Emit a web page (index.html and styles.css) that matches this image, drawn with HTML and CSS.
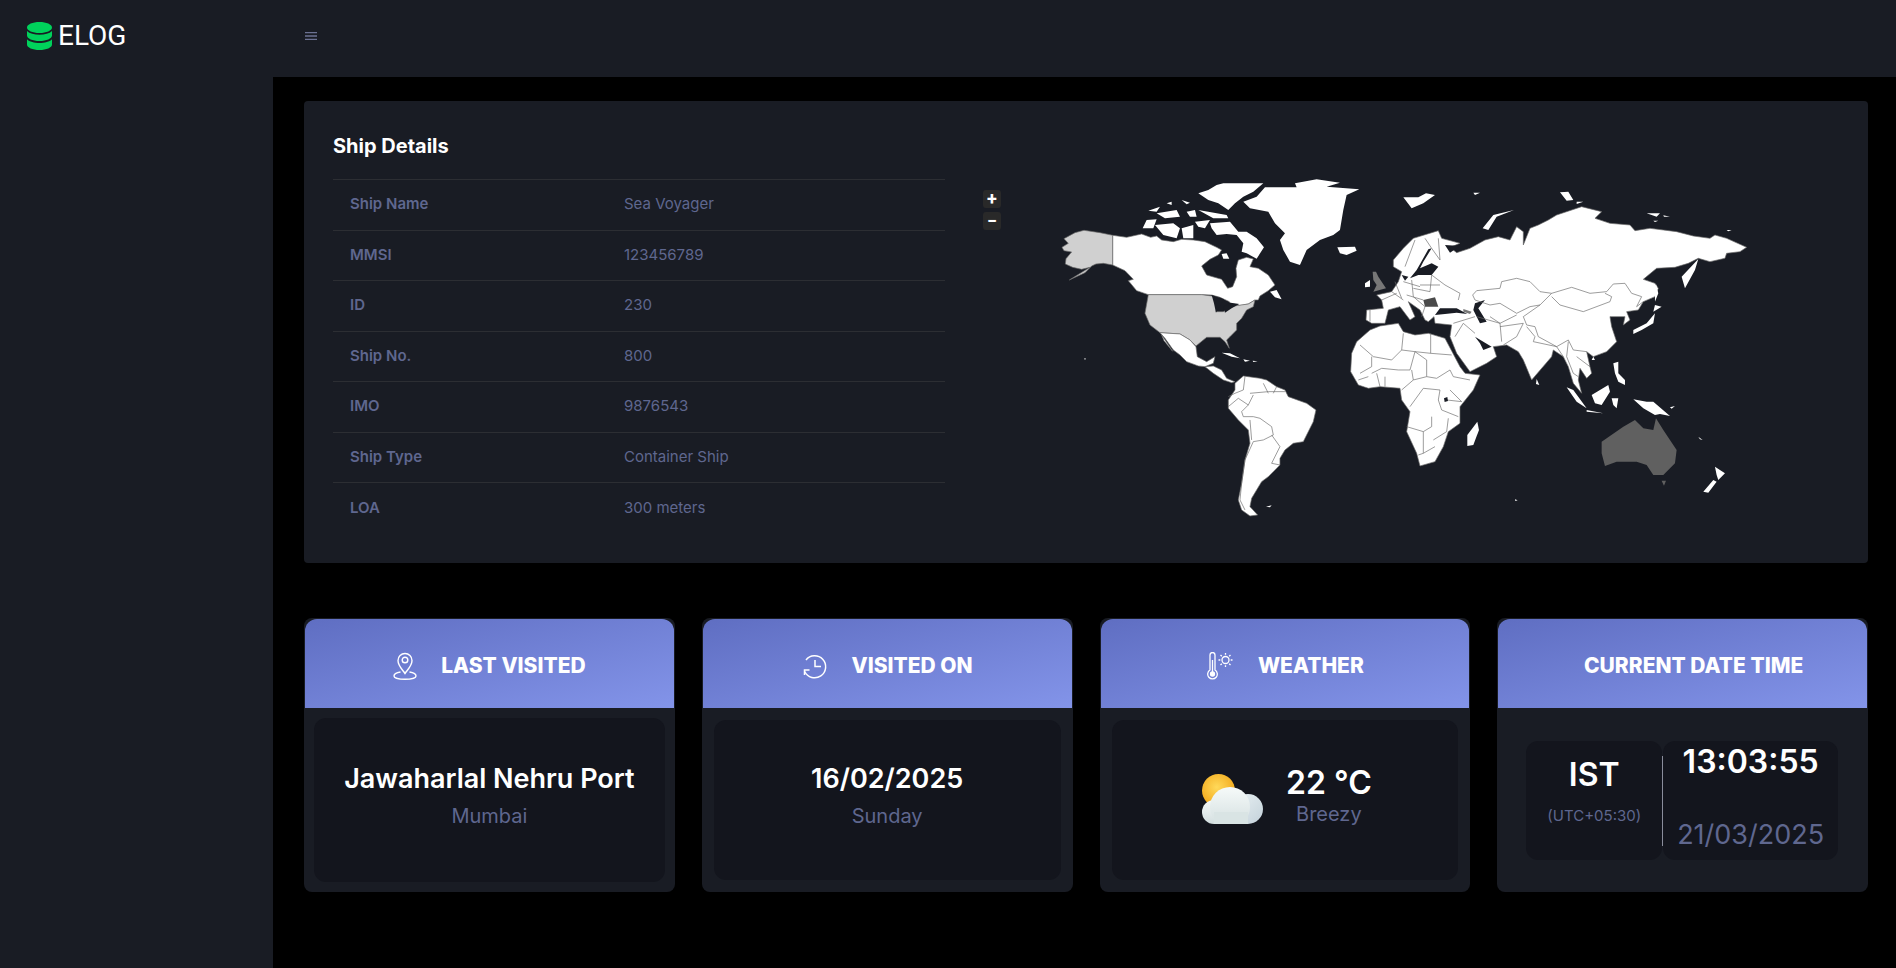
FILE: index.html
```html
<!DOCTYPE html>
<html lang="en">
<head>
<meta charset="utf-8">
<title>ELOG</title>
<link rel="stylesheet" href="styles.css">
</head>
<body>
<div class="app">
  <aside class="sidebar">
    <div class="brand">
      <svg class="brand-icon" viewBox="0 0 25 28"><path fill="#00d25b" d="M12.5 0C19.4 0 25 2.400 25 5.500S19.400 11 12.500 11 0 8.600 0 5.500 5.600 0 12.500 0zM0 9c2.500 2.600 7.300 3.800 12.500 3.800S22.500 11.600 25 9v4.500c0 3-5.600 5.500-12.500 5.500S0 16.500 0 13.500zM0 17.300c2.500 2.600 7.300 3.700 12.500 3.700S22.500 19.900 25 17.300v5.200C25 25.600 19.400 28 12.500 28S0 25.600 0 22.500z"/></svg>
      <span class="brand-name">ELOG</span>
    </div>
  </aside>
  <div class="content">
    <header class="topbar">
      <svg class="menu-icon" viewBox="0 0 12 8"><path d="M0 .5h12M0 4h12M0 7.500h12" stroke="#6c7293" stroke-width="1.300" fill="none"/></svg>
    </header>
    <main class="main">
      <section class="ship-card">
        <h2 class="ship-title">Ship Details</h2>
        <div class="ship-body">
          <table class="ship-table">
            <tr><th>Ship Name</th><td>Sea Voyager</td></tr>
            <tr><th>MMSI</th><td>123456789</td></tr>
            <tr><th>ID</th><td>230</td></tr>
            <tr><th>Ship No.</th><td>800</td></tr>
            <tr><th>IMO</th><td>9876543</td></tr>
            <tr><th>Ship Type</th><td>Container Ship</td></tr>
            <tr><th>LOA</th><td>300 meters</td></tr>
          </table>
          <div class="map">
            <div class="zoom-btns"><span class="zoom-btn">+</span><span class="zoom-btn">−</span></div>
            <svg class="map-svg" viewBox="960 179 820 354">
              <g transform="translate(960 160) scale(.3333)" fill="#fff" stroke="#6b6b6b" stroke-width="2" stroke-linejoin="round">
                <path d="M458 226L500 232L545 222L572 232L590 228L605 240L640 245L665 238L700 240L735 245L770 262L785 270L775 285L750 298L725 318L740 345L785 358L803 385L818 380L830 350L828 325L835 300L860 292L880 297L870 320L895 325L925 345L945 375L925 392L900 408L895 420L885 420L865 432L820 440L808 425L780 412L755 405L725 404L565 404L530 392L505 362L520 358L495 332L458 315Z"/>
                <path fill="#d0d0d0" d="M458 226L420 218L372 211L345 218L312 236L325 250L306 262L312 272L335 276L318 296L316 312L338 322L365 328L390 322L328 360L375 338L395 318L408 312L430 310L458 315Z"/>
                <path fill="#d0d0d0" d="M565 404L725 404L755 408L775 412L768 455L790 455L808 440L865 432L885 420L880 440L860 450L845 475L830 490L830 510L810 530L800 540L808 565L795 545L780 532L740 532L708 558L690 540L660 522L600 518L570 495L555 460Z"/>
                <path d="M600 518L660 522L690 540L708 560L712 590L740 605L765 590L760 610L735 620L715 618L680 605L660 585L640 570L615 535ZM605 525L638 574L612 542Z"/>
                <path d="M735 620L760 618L785 630L800 655L825 665L815 668L790 660L760 640Z"/>
                <g stroke="none">
                  <path d="M785 578L810 580L840 595L815 590ZM850 598L870 602L855 605ZM878 602L893 604L880 606ZM375 595a2 2 0 1 0 .1 0Z"/>
                  <path d="M1005 70L1070 58L1140 68L1100 80L1198 88L1160 105L1150 150L1140 210L1120 225L1080 240L1040 270L1020 315L990 305L970 270L960 240L975 220L945 190L925 155L870 145L850 125L890 110L915 82L1010 82Z"/>
                  <path d="M790 70L910 70L880 95L850 110L825 130L805 150L775 130L745 120L715 100L745 90L770 75Z"/>
                  <path d="M750 190L810 185L835 215L860 215L890 235L912 262L890 296L860 280L845 275L850 250L830 225L800 222L770 225L755 205Z"/>
                  <path d="M585 195L640 190L660 205L650 235L610 225ZM548 205L560 180L590 178L580 205ZM565 152L600 140L590 155ZM590 160L650 150L660 170L615 175ZM665 120L690 128L680 133ZM680 155L705 150L710 170L690 170ZM715 150L800 165L805 175L760 175ZM705 185L750 180L735 205L715 200ZM620 130L635 125L635 135ZM665 205L700 195L700 235L670 235ZM930 395L950 390L965 418L945 412ZM785 282L800 280L808 296L790 296Z"/>
                  <path d="M1132 262L1185 260L1190 272L1160 285L1140 280Z"/>
                </g>
                <path d="M850 648L900 655L920 660L950 680L975 690L985 710L1040 730L1068 750L1060 785L1040 825L1030 845L1000 850L975 870L960 895L960 915L940 935L925 950L905 965L890 990L875 1015L870 1040L893 1065L870 1068L845 1050L835 1020L845 970L855 900L870 850L865 810L835 780L805 745L805 720L825 690L825 670Z"/>
                <path stroke="none" d="M918 1040L935 1036L930 1042Z"/>
                <g fill="none">
                  <path d="M855 650L850 690L825 700L805 710M805 740L835 715L865 735L845 755L850 770L880 770L900 775L935 800L940 825L910 840L880 845L855 900L845 970L840 1020L855 1050M870 780L875 840M935 825L960 860L935 910L960 915M870 700L925 695L975 695M910 670L925 700M950 680L940 700M880 705L865 735"/>
                </g>
                <path fill="#191c24" stroke="none" d="M755 405L792 418L778 440L768 458L762 430ZM790 440L812 428L838 432L815 445L795 458Z"/>
              </g>
              <g transform="translate(1360 160) scale(.3333)" fill="#fff" stroke="#6b6b6b" stroke-width="2" stroke-linejoin="round">
                <path d="M-25 580L-10 545L30 510L60 498L115 490L130 515L165 525L205 520L255 535L300 620L315 640L360 645L340 690L300 740L300 790L265 815L250 860L225 905L180 918L170 880L140 815L150 755L125 720L120 685L60 680L25 685L-5 675L-28 635Z"/>
                <path fill="none" d="M0 555L40 590L95 600L125 570L130 520M125 570L165 575L212 580L212 520M212 580L275 585M200 600L165 575L150 630L115 630L65 625L35 640M35 590L35 620L0 640M155 630L160 660L125 690M200 600L200 650L230 655L270 630L280 650L330 660M160 660L200 650M150 740L190 685L240 690L235 720L245 750L295 770M270 690L305 725L260 720M140 800L190 815L190 880L175 885M215 770L215 800L190 815M220 840L260 815L265 775M225 860L190 880M50 640L60 680M75 650L75 680M-5 660L25 650"/>
                <path fill="#191c24" stroke="none" d="M252 715l10-4 2 12-10 3Z"/>
                <path stroke="none" d="M352 785L357 810L340 855L322 858L322 825Z"/>
                <path d="M100 300L130 265L160 235L235 212L245 235L300 250L270 262L290 278L330 265L375 240L415 230L450 240L470 200L490 215L490 255L510 205L535 195L565 180L590 165L665 140L725 155L705 175L750 190L810 195L825 212L870 205L950 215L1000 228L1050 235L1065 225L1100 235L1160 262L1140 275L1100 280L1095 295L1050 305L1015 295L985 310L945 322L890 325L850 358L885 370L895 385L885 410L850 425L835 450L800 455L810 480L790 495L795 470L750 470L755 500L770 545L740 575L700 590L680 575L690 620L695 640L680 655L660 625L655 660L665 700L640 670L625 620L610 590L580 570L575 590L515 660L490 600L475 575L440 555L400 560L410 590L380 610L330 635L290 580L270 530L275 495L225 490L222 470L205 485L195 480L180 450L145 425L165 470L150 480L120 440L85 450L75 490L35 490L18 480L20 450L70 445L65 420L50 405L95 395L115 365L125 335L100 320Z"/>
                <g fill="#191c24" stroke="none">
                  <path d="M225 465L240 445L290 445L322 462L290 458L255 462Z"/>
                  <path d="M345 430L375 420L355 445L380 485L360 490L340 450Z"/>
                  <path d="M345 530L395 560L370 570L360 550Z"/>
                  <path d="M150 355L170 330L205 268L215 265L190 305L180 325L215 310L235 320L215 345L175 345Z"/>
                  <path d="M255 255L300 258L270 278Z"/>
                  <path d="M125 345L145 350L135 362Z"/>
                </g>
                <path fill="none" d="M215 345L255 375L300 400L295 420M338 405L350 392L420 385L425 365L470 355L510 365L540 395L575 400M575 400L635 382L690 400L740 395L760 372L795 370L815 400L845 410L830 440L850 425M575 410L600 435L670 455L750 425L755 410L735 400M338 405L345 420L390 435L420 430L470 460L510 440L540 435L575 400M540 435L490 470L500 495L525 500L535 530L590 560L625 540L640 570L680 575M390 470L420 490L470 465M350 470L385 480L420 490L425 545M420 500L490 490L470 530L430 555M500 500L525 530L520 545L590 560L610 590M625 545L620 590L640 640L655 650M650 590L690 620M285 530L310 490L345 520M280 490L345 470M95 395L130 420M105 365L125 415M155 360L160 410M215 345L210 395L160 385M190 420L140 405M240 375L180 375M135 320L165 240M195 235L215 265L240 300L235 235M65 420L110 400M30 450L30 485M130 365L180 380M160 410L195 440M195 440L185 470"/>
                <path fill="#777" stroke="none" d="M38 335L48 335L55 350L78 385L40 395L50 375L40 360Z"/>
                <path stroke="none" d="M15 370L30 360L30 380L15 382Z"/>
                <path fill="#4a4a4a" stroke="none" d="M190 420L225 412L235 440L195 440Z"/>
                <path fill="#777" stroke="none" d="M310 447L335 455L330 462L310 455Z"/>
                <path fill="#606060" stroke="none" d="M725 845L790 800L825 780L850 805L880 810L888 775L910 810L950 870L945 910L910 945L880 945L860 915L830 905L770 905L735 918L725 880ZM905 962L918 962L912 977Z"/>
                <g stroke="none">
                  <path d="M130 112L175 112L198 100L225 105L190 130L155 145ZM368 205L400 165L462 150L410 170L385 210ZM965 350L1015 297L1005 330L975 385Z"/>
                  <path d="M885 435L905 440L880 455ZM885 460L880 490L845 510L820 522L820 510L860 490ZM888 372L895 400L885 425L885 400Z"/>
                  <path d="M600 97L625 95L640 120L620 122ZM650 125L670 125L650 132ZM860 160L900 160L890 170ZM880 182L895 182L885 186ZM1100 210L1115 210L1105 214ZM340 98L360 98L345 105ZM910 166L930 170L912 170Z"/>
                  <path d="M760 610L775 605L775 640L795 660L795 675L775 665L765 640ZM695 705L745 675L750 695L725 735L705 730ZM620 682L640 690L680 745L650 725ZM680 750L730 760L680 755ZM755 715L775 715L770 745L760 735ZM820 718L860 725L880 725L930 768L900 762L885 765L850 745Z"/>
                  <path d="M1065 920L1095 940L1075 960L1070 945ZM1060 960L1030 995L1045 998L1070 965ZM530 657L538 675L528 672ZM700 590L705 600L695 600ZM465 1018L473 1021L466 1023ZM930 742L945 738L935 746ZM1015 830L1028 840L1020 838Z"/>
                </g>
              </g>
            </svg>
          </div>
        </div>
      </section>

      <section class="stats">
        <article class="stat-card">
          <header class="stat-head">
            <svg class="stat-icon" viewBox="0 0 24 28" fill="none" stroke="#fff" stroke-width="1.400"><path d="M12 21.500C8.500 16.500 5 13.500 5 8.500a7 7 0 0 1 14 0c0 5-3.500 8-7 13z"/><circle cx="12" cy="8" r="2.800"/><path d="M7.500 20C3.500 20.700 1 22.200 1 24c0 2 5 3.300 11 3.300S23 26 23 24c0-1.800-2.500-3.300-6.500-4"/></svg>
            <span>LAST VISITED</span>
          </header>
          <div class="stat-body pad-tight">
            <div class="panel">
              <div class="big">Jawaharlal Nehru Port</div>
              <div class="sub">Mumbai</div>
            </div>
          </div>
        </article>
        <article class="stat-card">
          <header class="stat-head">
            <svg class="stat-icon clock" viewBox="0 0 26 26" fill="none" stroke="#fff" stroke-width="1.500"><path d="M4 7A11 11 0 1 1 2.700 18.500"/><path d="M13 7v6.500h6"/><path d="M2.500 22v-5h5"/></svg>
            <span>VISITED ON</span>
          </header>
          <div class="stat-body">
            <div class="panel">
              <div class="big">16/02/2025</div>
              <div class="sub">Sunday</div>
            </div>
          </div>
        </article>
        <article class="stat-card">
          <header class="stat-head">
            <svg class="stat-icon thermo" viewBox="0 0 28 28" fill="none" stroke="#fff" stroke-width="1.300"><path d="M4 18V3a2.500 2.500 0 0 1 5 0v15a4.800 4.800 0 1 1-5 0z"/><circle cx="6.500" cy="22" r="2" fill="#fff"/><path d="M6.500 8v12"/><circle cx="19.500" cy="8" r="3.500"/><path d="M19.500 1v1.800M19.500 13.200V15M12.500 8h1.800M24.700 8h1.800M14.500 3l1.300 1.300M23.200 11.700l1.300 1.300M24.500 3l-1.300 1.300M15.800 11.700L14.500 13"/></svg>
            <span>WEATHER</span>
          </header>
          <div class="stat-body">
            <div class="panel panel-row">
              <svg class="weather-icon" viewBox="0 0 62 50">
                <defs>
                  <radialGradient id="sun" cx=".45" cy=".4" r=".7"><stop offset="0" stop-color="#ffd95a"/><stop offset="1" stop-color="#f0a010"/></radialGradient>
                  <linearGradient id="cloud" x1="0" y1="0" x2="0" y2="1"><stop offset="0" stop-color="#f6faf9"/><stop offset="1" stop-color="#d2dedf"/></linearGradient>
                  <linearGradient id="cloud2" x1="0" y1="0" x2="1" y2="1"><stop offset="0" stop-color="#eaf2f4"/><stop offset="1" stop-color="#c3d1da"/></linearGradient>
                </defs>
                <circle cx="16.500" cy="16.500" r="16.500" fill="url(#sun)"/>
                <circle cx="46" cy="35" r="15" fill="url(#cloud2)"/>
                <circle cx="12" cy="38" r="12" fill="url(#cloud)"/>
                <circle cx="28" cy="33" r="20" fill="url(#cloud)"/>
                <rect x="12" y="38" width="34" height="12" fill="#d9e4e4"/>
              </svg>
              <div class="weather-text">
                <div class="temp">22 °C</div>
                <div class="sub sub-tight">Breezy</div>
              </div>
            </div>
          </div>
        </article>
        <article class="stat-card">
          <header class="stat-head stat-head-noicon">
            <span>CURRENT DATE TIME</span>
          </header>
          <div class="stat-body clock-body">
            <div class="zone-box">
              <div class="zone">IST</div>
              <div class="offset">(UTC+05:30)</div>
            </div>
            <div class="clock-rule"></div>
            <div class="time-box">
              <div class="time">13:03:55</div>
              <div class="date">21/03/2025</div>
            </div>
          </div>
        </article>
      </section>
    </main>
  </div>
</div>
</body>
</html>
```
FILE: styles.css
```css
* { box-sizing: border-box; }
html, body { margin: 0; height: 100%; }
body { background: #000; font-family: Inter, Roboto, "Liberation Sans", sans-serif; color: #fff; overflow: hidden; }
.app { display: flex; height: 968px; }
.sidebar { width: 273px; flex: none; background: #191c24; }
.brand { display: flex; align-items: center; gap: 6px; padding: 20px 0 0 27px; }
.brand-icon { width: 25px; height: 28px; flex: none; }
.brand-name { font: 400 28px/32px Roboto, sans-serif; color: #fff; }
.content { flex: 1; min-width: 0; display: flex; flex-direction: column; }
.topbar { height: 77px; flex: none; background: #191c24; display: flex; align-items: center; padding-left: 32px; }
.menu-icon { width: 12px; height: 8px; margin-top: -5px; }
.main { flex: 1; padding: 24px 28px 0 31px; }

.ship-card { height: 462px; background: #191c24; border-radius: 4px; padding: 33px 0 0 29px; }
.ship-title { margin: 0 0 21px; font-size: 20px; line-height: 24px; font-weight: 700; color: #fff; }
.ship-body { display: flex; gap: 15px; }
.ship-table { width: 612px; flex: none; border-collapse: collapse; table-layout: fixed; font-size: 15px; color: #5f678f; }
.ship-table tr { height: 50.300px; border-top: 1px solid #2c2e33; }
.ship-table th { width: 291px; padding: 0 0 2px 17px; text-align: left; font-weight: 600; }
.ship-table td { padding: 0 0 2px; font-weight: 400; }
.map { position: relative; width: 820px; height: 354px; flex: none; }
.map-svg { display: block; width: 820px; height: 354px; }
.zoom-btns { position: absolute; left: 23px; top: 11px; display: flex; flex-direction: column; gap: 4px; }
.zoom-btn { width: 18px; height: 18px; border-radius: 3px; background: #292929; color: #fff; font: 700 18px/18px Roboto, sans-serif; text-align: center; }

.stats { display: grid; grid-template-columns: repeat(4, 1fr); gap: 27px; margin-top: 55px; }
.stat-card { height: 274px; background: #191c24; border-radius: 8px; padding: 1px 1px 0; display: flex; flex-direction: column; }
.stat-head { height: 89px; flex: none; padding-top: 4px; border-radius: 12px 12px 0 0; background: linear-gradient(to bottom right, #5f6ec2 0%, #8394e9 100%); display: flex; align-items: center; justify-content: center; gap: 24px; font-size: 21px; font-weight: 800; color: #fff; }
.stat-head-noicon { padding-left: 22px; }
.stat-icon { width: 24px; height: 28px; flex: none; }
.stat-icon.clock { width: 26px; }
.stat-icon.thermo { width: 28px; }
.stat-body { flex: 1; padding: 12px; display: flex; margin: 0 -1px; }
.pad-tight { padding: 10px; }
.panel { flex: 1; background: #13151d; border-radius: 12px; display: flex; flex-direction: column; align-items: center; justify-content: center; padding-bottom: 10px; }
.panel-row { flex-direction: row; gap: 22px; padding-left: 4px; }
.big { font-size: 27px; line-height: 31px; font-weight: 600; color: #fff; }
.sub { font-size: 20px; line-height: 24px; margin-top: 10px; color: #5f678f; }
.sub-tight { margin-top: 0; }
.weather-icon { width: 62px; height: 50px; flex: none; margin-top: 8px; }
.weather-text { display: flex; flex-direction: column; align-items: center; }
.temp { font-size: 32px; line-height: 38px; font-weight: 600; }
.clock-body { padding: 33px 30px 32px 29px; align-items: stretch; }
.zone-box { width: 136px; flex: none; background: #13151d; border-radius: 12px; display: flex; flex-direction: column; align-items: center; padding-top: 15px; }
.zone { font-size: 32px; line-height: 38px; font-weight: 600; }
.offset { font-size: 15px; line-height: 18px; margin-top: 13px; color: #5f678f; }
.clock-rule { width: 1px; flex: none; align-self: center; height: 90px; background: #8a8d9c; }
.time-box { flex: 1; background: #13151d; border-radius: 12px; display: flex; flex-direction: column; align-items: center; justify-content: space-between; padding: 2px 0 9px; }
.time { font-size: 32px; line-height: 38px; font-weight: 600; }
.date { font-size: 27px; line-height: 32px; color: #5f678f; }
```
